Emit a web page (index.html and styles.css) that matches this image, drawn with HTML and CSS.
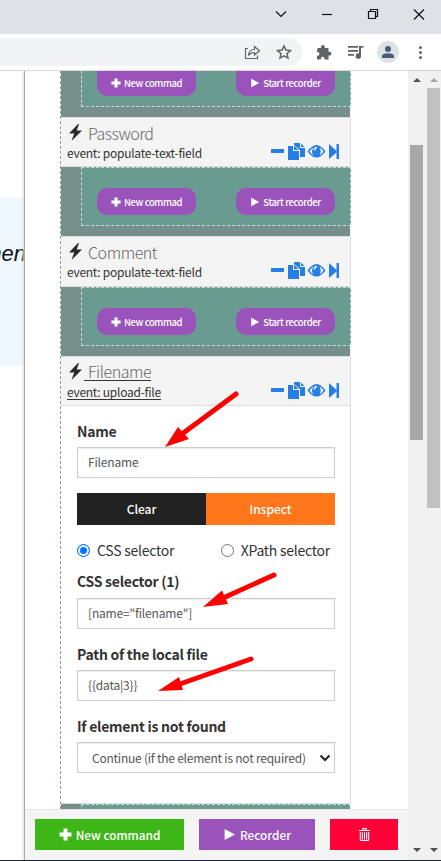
FILE: index.html
```
<!DOCTYPE html>
<html lang="en">
<head>
<meta charset="utf-8">
<title>Command recorder</title>
<link rel="stylesheet" href="styles.css">
</head>
<body>
<svg class="defs" width="0" height="0">
  <symbol id="plus" viewBox="0 0 12 12"><path d="M4.200.5h3.600v3.700h3.700v3.600H7.800v3.700H4.200V7.800H.5V4.200h3.700z"/></symbol>
  <symbol id="play" viewBox="0 0 12 12"><path d="M1.500 1 11 6 1.500 11z"/></symbol>
  <symbol id="bolt" viewBox="0 0 13 17"><path d="M9 0 0 9.500h5.200L2.500 17 13 6.500H7.700L10 0z"/></symbol>
  <symbol id="actions" viewBox="0 0 70 18">
    <path d="M1 7h13v4H1z"/>
    <path d="M18 4h5v5h6v9H18z"/>
    <path d="M24 1h6v5h5v9h-5V8l-6-5zM24 3.500V8h4.500zM31 1.500V5h3.500z"/>
    <path fill-rule="evenodd" d="M37.500 9.500Q46.500-3.500 55.500 9.500 46.500 21.500 37.500 9.500zM39.500 9.500Q42 6.200 43.500 5.600 40.500 10.500 43.500 13.300 41 12 39.500 9.500zM49.500 5.500Q52.500 7 53.500 9.500 52 12 49.500 13.300 52 10 49.500 5.500z"/>
    <path class="shine" d="M44.500 8.500Q44.500 5.500 47 5.500"/>
    <path d="M59 2l7.500 7V2H69v15h-2.500v-6.500L59 17z"/>
  </symbol>
</svg>
<div class="window">
  <div class="titlebar">
    <svg width="170" height="34" viewBox="271 0 170 34" fill="none" stroke="#111" stroke-width="1.200">
      <path d="m276 11.500 5 5 5-5"/><path d="M322 14.500h10"/>
      <path d="M368.500 11.500h7v7h-7zM370.500 11v-1.500h7v7H376"/>
      <path d="m414 9.500 10 10m0-10-10 10"/>
    </svg>
  </div>
  <div class="toolbar">
    <div class="omnibox">
      <svg width="54" height="28" viewBox="242 38 54 28" fill="none" stroke="#5f6368" stroke-width="1.200">
        <path d="M248 48.500h-2.500v10h12v-3"/><path d="M248.500 55.500q.5-6 6-6v-3l5 4.300-5 4.200v-2.500q-4 0-6 3z"/>
        <path stroke-width="1.500" d="m284 46 1.900 4.100 4.500.5-3.400 3 1 4.500-4-2.300-4 2.300 1-4.500-3.400-3 4.500-.5z"/>
      </svg>
    </div>
    <svg width="139" height="36" viewBox="302 34 139 36" fill="#5f6368">
      <path d="M317.500 48h3.500v-1a1.900 1.900 0 0 1 3.800 0v1h3.700v3.800h1a1.900 1.900 0 0 1 0 3.800h-1V59.500h-4v-1a1.800 1.800 0 0 0-3.600 0v1h-3.900v-3.800h1a1.900 1.900 0 0 0 0-3.700h-1z"/>
      <path d="M348 46h10v1.700h-10zM348 50h10v1.700h-10zM348 54h6v1.700h-6zM359 46h4.500v1.700H361V56a2.700 2.700 0 1 1-2-2.500z"/>
      <circle cx="388" cy="52" r="11" fill="#dee1e6"/>
      <circle cx="388" cy="49" r="3" fill="#4b5c77"/><path fill="#4b5c77" d="M382 58v-1.500q0-3.200 6-3.200t6 3.200V58z"/>
      <circle cx="420.500" cy="47.500" r="1.500"/><circle cx="420.500" cy="52.500" r="1.500"/><circle cx="420.500" cy="57.500" r="1.500"/>
    </svg>
  </div>
  <div class="viewport">
    <div class="page"><div class="page-card"><i>men</i></div></div>
    <main class="panel">
      <div class="list">
        <section class="steps first"><div class="zone">
          <button class="pill"><svg><use href="#plus"/></svg>New commad</button>
          <button class="pill"><svg><use href="#play"/></svg>Start recorder</button>
        </div></section>
        <header class="head short">
          <div class="title"><svg class="bolt"><use href="#bolt"/></svg><span>Password</span></div>
          <div class="event"><span>event: populate-text-field</span></div><svg class="actions"><use href="#actions"/></svg>
        </header>
        <section class="steps"><div class="zone">
          <button class="pill"><svg><use href="#plus"/></svg>New commad</button>
          <button class="pill"><svg><use href="#play"/></svg>Start recorder</button>
        </div></section>
        <header class="head">
          <div class="title"><svg class="bolt"><use href="#bolt"/></svg><span>Comment</span></div>
          <div class="event"><span>event: populate-text-field</span></div><svg class="actions"><use href="#actions"/></svg>
        </header>
        <section class="steps"><div class="zone">
          <button class="pill"><svg><use href="#plus"/></svg>New commad</button>
          <button class="pill"><svg><use href="#play"/></svg>Start recorder</button>
        </div></section>
        <header class="head short open">
          <div class="title"><svg class="bolt"><use href="#bolt"/></svg><span>Filename</span></div>
          <div class="event"><span>event: upload-file</span></div><svg class="actions"><use href="#actions"/></svg>
        </header>
        <form class="form">
          <label class="label">Name</label>
          <div class="input">Filename</div>
          <div class="split"><button class="clear" type="button">Clear</button><button class="inspect" type="button">Inspect</button></div>
          <div class="radios">
            <label><span class="radio on"></span>CSS selector</label>
            <label><span class="radio"></span>XPath selector</label>
          </div>
          <label class="label second">CSS selector (1)</label>
          <div class="input">[name="filename"]</div>
          <label class="label">Path of the local file</label>
          <div class="input">{{data|3}}</div>
          <label class="label">If element is not found</label>
          <div class="input select"><span>Continue (if the element is not required)</span><svg width="12" height="8"><path d="m1.500 1.500 4.500 4.500 4.500-4.500" fill="none" stroke="#222" stroke-width="2"/></svg></div>
        </form>
        <section class="steps last"><div class="zone"></div></section>
      </div>
      <footer class="footer">
        <button class="cmd"><svg><use href="#plus"/></svg>New command</button>
        <button class="rec"><svg><use href="#play"/></svg>Recorder</button>
        <button class="del" aria-label="Delete"><svg viewBox="0 0 12 14"><path fill="none" stroke="#fff" stroke-width="1.200" d="M4 2V.7h4V2M0 2.700h12M1.500 4.200v8.500q0 .7.700.7h7.600q.7 0 .7-.7V4.200M3.700 4.500v8M6 4.500v8M8.300 4.500v8"/></svg></button>
      </footer>
    </main>
    <div class="scroll inner"><b class="up"></b><div class="thumb"></div><b class="down"></b></div>
    <div class="scroll outer"><b class="up"></b><div class="thumb"></div><b class="down"></b></div>
  </div>
  <svg class="arrows" width="441" height="861">
    <path class="shaft" d="M236 394 182 434M274 575 223 598M251 659 180 684"/>
    <path d="M165 447 178 427 189 439zM203 607 222 590.500 228 604zM158 691 179 677 183 690z"/>
  </svg>
</div>
</body>
</html>
```
FILE: styles.css
```
* { box-sizing: border-box; }
body { margin: 0; font-family: "Noto Sans CJK SC", "Noto Sans", sans-serif; color: #333; }
button { border: 0; padding: 0; font: inherit; color: #fff; display: flex; align-items: center; justify-content: center; }
.defs { position: absolute; }
.window { position: relative; width: 441px; height: 861px; overflow: hidden; background: #fff; display: flex; flex-direction: column; border-bottom: 1px solid #17243a; }
.titlebar { height: 34px; background: #dee1e6; display: flex; justify-content: flex-end; }
.toolbar { height: 37px; display: flex; align-items: center; border-bottom: 1px solid #d5d7d9; flex: none; }
.omnibox { width: 302px; height: 28px; background: #f1f3f4; border-radius: 0 14px 14px 0; display: flex; justify-content: flex-end; padding-right: 6px; }
.viewport { flex: 1; min-height: 0; display: flex; }
.page { width: 24px; padding-top: 127px; overflow: hidden; flex: none; }
.page-card { height: 168px; background: #eff7ff; display: flex; justify-content: flex-end; padding-top: 43px; font: italic 22px/26px "Liberation Sans", sans-serif; color: #111; }
.page-card i { margin-right: -2px; }
.panel { width: 384px; border-left: 1px solid #aaa; display: flex; flex-direction: column; flex: none; box-shadow: -1px 0 2px #ddd; background: #fff; }
.list { width: 291px; margin-left: 35px; height: 738px; overflow: hidden; border-left: 1px dashed #8aa39e; }
.steps { height: 69px; background: #778f8a; margin-right: 1px; padding-left: 20px; }
.first { height: 46px; }
.last { height: 6px; overflow: hidden; }
.zone { width: 270px; height: 59px; background: #6a9b90; border: 1px dashed #cfdcd8; padding: 20px 15px 0; display: flex; justify-content: space-between; }
.first .zone { height: 36px; border-top: 0; padding-top: 0; }
.pill { width: 99px; height: 27px; background: #9953bb; border-radius: 10px; font-size: 9.5px; font-weight: 500; letter-spacing: -.4px; gap: 3px; white-space: nowrap; }
.first .pill { height: 25px; padding-bottom: 2px; border-radius: 0 0 10px 10px; }
.pill svg { width: 10px; height: 10px; fill: #fff; }
.head { position: relative; height: 51px; background: #f4f4f4; border: 1px solid #ddd; border-left: 0; padding-left: 6px; }
.head.short { height: 50px; }
.title { display: flex; height: 29px; align-items: center; font-size: 16px; font-weight: 300; line-height: 20px; color: #666; letter-spacing: -.45px; }
.title span { margin-left: 5px; }
.bolt { width: 13px; height: 17px; margin: 0 1px 1px 2px; fill: #2a2a2a; }
.event { font-size: 12px; line-height: 16px; margin-top: -2px; letter-spacing: -.26px; }
.open span { border-bottom: 1px solid #333; }
.open .title span { margin-left: 1px; padding-left: 4px; line-height: 17px; }
.open .event span { display: inline-block; line-height: 14px; }
.actions { position: absolute; right: 10px; top: 24px; width: 70px; height: 18px; fill: #267fe5; }
.shine { fill: none; stroke: #f4f4f4; stroke-width: 1.500px; }
.form { height: 398px; background: #fff; border: 1px solid #ddd; border-width: 0 1px 1px 0; padding: 16px 15px 0 16px; }
.label { display: block; height: 25px; font-size: 14px; font-weight: 700; line-height: 19px; letter-spacing: -.26px; }
.input { height: 31px; border: 1px solid #ccc; box-shadow: inset 0 1px 1px #eee; padding-left: 10px; font-size: 12px; line-height: 28px; letter-spacing: -.18px; color: #555; margin-bottom: 16px; white-space: nowrap; }
.split { display: grid; grid-template-columns: 1fr 1fr; height: 32px; margin-top: -1px; font-size: 12px; font-weight: 500; letter-spacing: -.25px; }
.split button { padding-bottom: 2px; }
.clear { background: #222; } .inspect { background: #ff771a; }
.radios { display: flex; justify-content: space-between; margin-top: 16px; padding-right: 5px; font-size: 14px; line-height: 19px; letter-spacing: -.25px; }
.radios label { display: flex; align-items: center; gap: 7px; }
.radio { width: 13px; height: 13px; border: 1px solid #767676; border-radius: 50%; }
.radio.on { border-color: #0075ff; background: #0075ff; box-shadow: inset 0 0 0 2px #fff; }
.second { margin-top: 12px; height: 26px; }
.select { display: flex; align-items: center; justify-content: space-between; padding: 0 3px 0 14px; }
.select span { width: 214px; overflow: hidden; letter-spacing: -.23px; }
.footer { height: 51px; border-top: 1px solid #e5e5e5; background: #f4f4f4; padding: 9px 10px; display: flex; gap: 15px; font-size: 11.800px; font-weight: 500; letter-spacing: -.5px; }
.footer button { height: 31px; gap: 4px; padding-bottom: 1px; }
.footer svg { width: 13px; height: 13px; fill: #fff; }
.cmd { width: 149px; background: #3eb618; } .rec { width: 116px; background: #9953bb; } .del { width: 68px; background: #ff0037; }
.scroll { width: 17px; background: #f1f1f1; display: flex; flex-direction: column; padding: 7px 2px 8px; flex: none; }
.outer { width: 16px; padding-right: 1px; padding-left: 2px; }
.thumb { background: #a8a8a8; height: 295px; margin-top: 63px; }
.outer .thumb { background: #c1c1c1; height: 420px; margin-top: 6px; }
.scroll b { width: 0; border: 4px solid transparent; align-self: center; }
.up { border-top: 0 !important; border-bottom-color: #505050 !important; }
.outer .up { border-bottom-color: #a3a3a3 !important; }
.down { margin-top: auto; border-bottom: 0 !important; border-top-color: #505050 !important; }
.arrows { position: absolute; inset: 0; fill: #f00; pointer-events: none; }
.shaft { stroke: #f00; stroke-width: 5px; stroke-linecap: round; }
```
